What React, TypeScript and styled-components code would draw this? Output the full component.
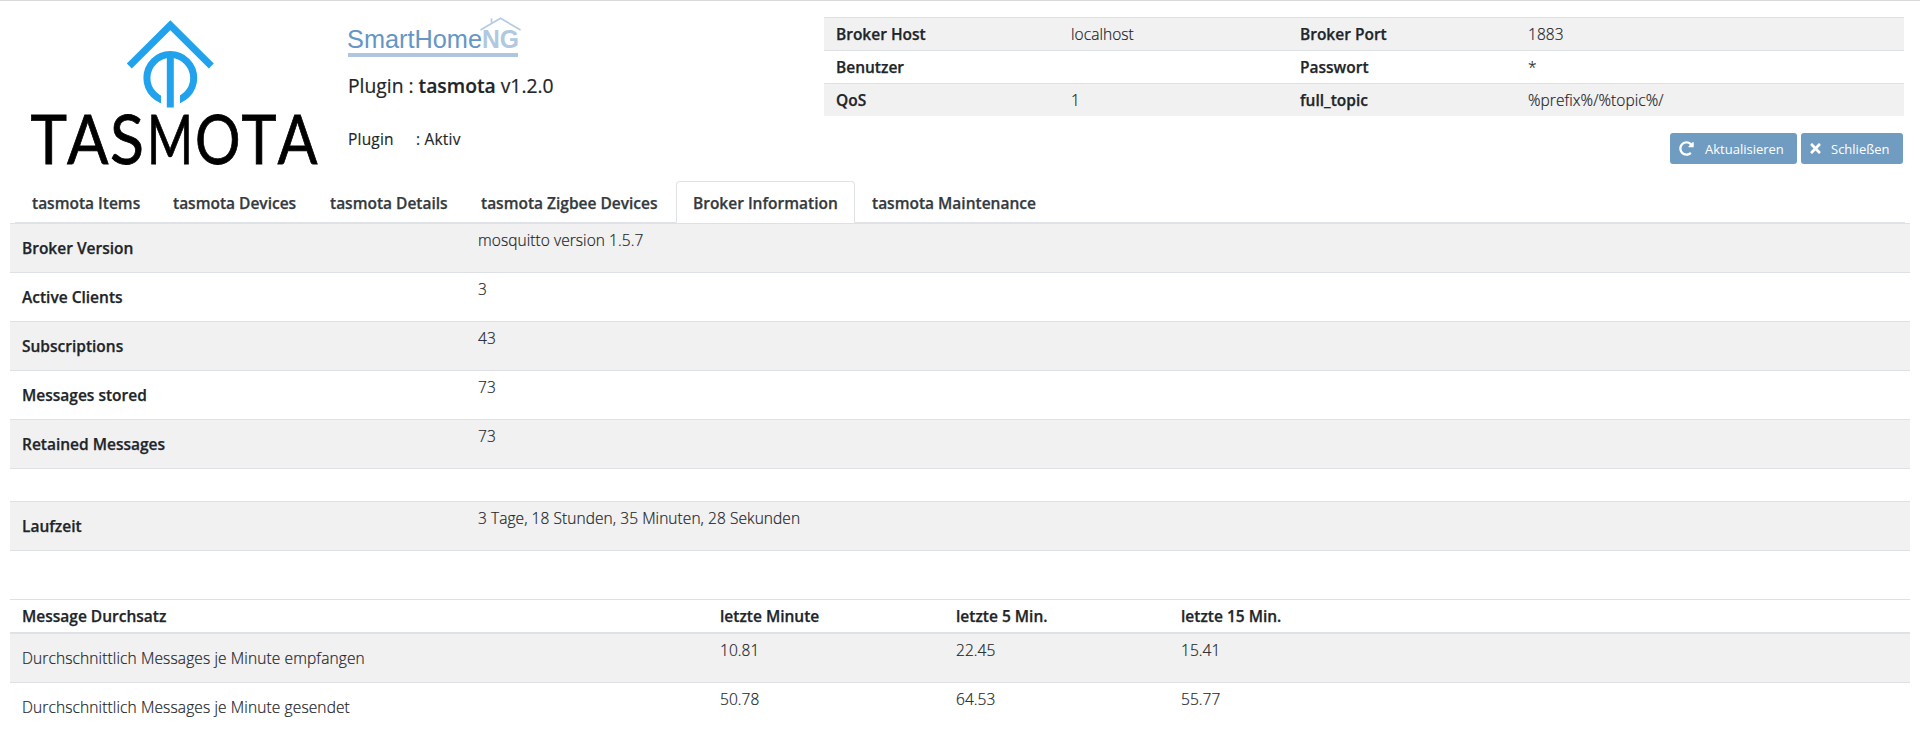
import React from 'react';
import styled, { createGlobalStyle, css } from 'styled-components';
import { FaRedoAlt, FaTimes } from 'react-icons/fa';

const LINE = '#dee2e6';
const STRIPE = '#f1f1f1';

const GlobalStyle = createGlobalStyle`
  *, *::before, *::after { box-sizing: border-box; }
  body {
    margin: 0;
    background: #fff;
    color: #212529;
    font-family: 'Open Sans', 'Noto Sans', sans-serif;
    font-size: 15.5px;
    line-height: 24px;
  }
`;

const Page = styled.div`
  height: 755px;
  overflow: hidden;
  border-top: 1px solid #d9d9d9;
`;

const Header = styled.header`
  display: flex;
  height: 180px;
`;

const LogoColumn = styled.div`
  width: 348px;
  flex: none;
`;

const TitleColumn = styled.div`
  width: 476px;
  flex: none;
  padding-top: 13px;
`;

const PluginTitle = styled.h1`
  margin: 9px 0 0;
  font-size: 19.3px;
  font-weight: 400;
  line-height: 30px;
  -webkit-text-stroke: 0.2px;

  strong { font-weight: 600; }
`;

const PluginState = styled.div`
  display: flex;
  margin-top: 26px;
  letter-spacing: 0.2px;
  -webkit-text-stroke: 0.15px;
`;

const StateLabel = styled.span`
  width: 68px;
`;

const BrokerColumn = styled.div`
  flex: 1;
  padding: 16px 16px 0 0;
`;

const Table = styled.table`
  width: 100%;
  table-layout: fixed;
  border-collapse: separate;
  border-spacing: 0;
`;

const Row = styled.tr<{ $striped?: boolean; $height: number; $borderless?: boolean }>`
  height: ${(p) => p.$height}px;
  background: ${(p) => (p.$striped ? STRIPE : 'transparent')};

  > * { border-top: ${(p) => (p.$borderless ? 0 : 1)}px solid ${LINE}; }
`;

const cell = css`
  padding: 4px 12px;
  text-align: left;
`;

const Label = styled.th<{ $middle?: boolean }>`
  ${cell}
  font-weight: 600;
  -webkit-text-stroke: 0.25px;
  vertical-align: ${(p) => (p.$middle ? 'middle' : 'top')};
`;

const Value = styled.td<{ $middle?: boolean }>`
  ${cell}
  font-weight: 300;
  letter-spacing: ${(p) => (p.$middle ? 0.12 : 0.06)}px;
  -webkit-text-stroke: 0.2px;
  vertical-align: ${(p) => (p.$middle ? 'middle' : 'top')};
`;

const TableHead = styled.thead`
  th { border-bottom: 2px solid ${LINE}; }
`;

const Actions = styled.div`
  display: flex;
  justify-content: flex-end;
  gap: 4px;
  margin-top: 17px;
  padding-right: 1px;
`;

const Button = styled.button<{ $width: number; $inset: number; $gap: number }>`
  display: flex;
  align-items: center;
  gap: ${(p) => p.$gap}px;
  width: ${(p) => p.$width}px;
  height: 31px;
  padding: 0 0 0 ${(p) => p.$inset}px;
  border: 0;
  border-radius: 3px;
  background: #709cc2;
  color: #fff;
  font: 400 13px 'Open Sans', sans-serif;
  white-space: nowrap;
`;

const Tabs = styled.nav`
  display: flex;
  height: 42px;
  margin: 0 15px;
  border-bottom: 1px solid ${LINE};
`;

const Tab = styled.a<{ $active?: boolean; $width: number }>`
  width: ${(p) => p.$width}px;
  height: 42px;
  padding: 9px 0 0 16px;
  border: 1px solid ${(p) => (p.$active ? LINE : 'transparent')};
  border-bottom-color: ${(p) => (p.$active ? '#fff' : 'transparent')};
  border-radius: 4px 4px 0 0;
  color: #343a40;
  font-weight: 600;
  -webkit-text-stroke: 0.25px;
  white-space: nowrap;
`;

const Content = styled.main`
  padding: 0 10px;
`;

const TasmotaLogo = () => (
  <svg width="330" height="180" viewBox="0 1 330 180" role="img">
    <g fill="none" stroke="#21a2ec" strokeWidth="7">
      <path d="M129.3 66 170.3 25.2 211.3 66" />
      <circle cx="170.3" cy="78" r="23.4" />
    </g>
    <path d="M161 84h19v24h-19z" fill="#fff" />
    <path d="M166.8 54h7v53.5h-7z" fill="#21a2ec" />
    <text y="163.6" fontFamily="Lato" fontSize="68" fill="#000" stroke="#000" strokeWidth="0.8">
      <tspan x="30.5" textLength="36.5" lengthAdjust="spacingAndGlyphs">T</tspan>
      <tspan x="67" textLength="41.5" lengthAdjust="spacingAndGlyphs">A</tspan>
      <tspan x="110" textLength="34" lengthAdjust="spacingAndGlyphs">S</tspan>
      <tspan x="147" textLength="46" lengthAdjust="spacingAndGlyphs">M</tspan>
      <tspan x="195" textLength="45.5" lengthAdjust="spacingAndGlyphs">O</tspan>
      <tspan x="241.5" textLength="35" lengthAdjust="spacingAndGlyphs">T</tspan>
      <tspan x="277.5" textLength="40" lengthAdjust="spacingAndGlyphs">A</tspan>
    </text>
  </svg>
);

const SmartHomeLogo = () => (
  <svg width="176" height="48" viewBox="348 14 176 48" role="img" display="block">
    <g fontFamily="Liberation Sans" fontSize="25.5">
      <text x="347" y="48" textLength="135" lengthAdjust="spacingAndGlyphs" fill="#6596c5">SmartHome</text>
      <text x="482" y="48" textLength="37" lengthAdjust="spacingAndGlyphs" fontWeight="700" fill="#b0c8e0">NG</text>
    </g>
    <path d="M348 53h170v4H348z" fill="#aec7df" />
    <path d="M480.5 30 500.5 18.3 520.5 30M491.5 22.500v-4" fill="none" stroke="#b4cbe1" strokeWidth="1.7" />
  </svg>
);

const connection = [
  ['Broker Host', 'localhost', 'Broker Port', '1883'],
  ['Benutzer', '', 'Passwort', '*'],
  ['QoS', '1', 'full_topic', '%prefix%/%topic%/'],
];

const tabs: [string, number][] = [
  ['tasmota Items', 141],
  ['tasmota Devices', 157],
  ['tasmota Details', 151],
  ['tasmota Zigbee Devices', 212],
  ['Broker Information', 179],
  ['tasmota Maintenance', 198],
];

const broker = [
  ['Broker Version', 'mosquitto version 1.5.7'],
  ['Active Clients', '3'],
  ['Subscriptions', '43'],
  ['Messages stored', '73'],
  ['Retained Messages', '73'],
];

const throughput = [
  ['Durchschnittlich Messages je Minute empfangen', '10.81', '22.45', '15.41'],
  ['Durchschnittlich Messages je Minute gesendet', '50.78', '64.53', '55.77'],
];

export default function App() {
  return (
    <Page>
      <GlobalStyle />
      <Header>
        <LogoColumn><TasmotaLogo /></LogoColumn>
        <TitleColumn>
          <SmartHomeLogo />
          <PluginTitle>Plugin : <strong>tasmota</strong> v1.2.0</PluginTitle>
          <PluginState><StateLabel>Plugin</StateLabel>: Aktiv</PluginState>
        </TitleColumn>
        <BrokerColumn>
          <Table>
            <colgroup><col width="235" /><col width="229" /><col width="228" /><col /></colgroup>
            <tbody>
              {connection.map(([a, b, c, d], i) => (
                <Row key={a} $striped={i % 2 === 0} $height={33}>
                  <Label>{a}</Label><Value>{b}</Value><Label>{c}</Label><Value>{d}</Value>
                </Row>
              ))}
            </tbody>
          </Table>
          <Actions>
            <Button $width={127} $inset={9} $gap={11}><FaRedoAlt size={15} />Aktualisieren</Button>
            <Button $width={102} $inset={7} $gap={8}><FaTimes size={15} />Schließen</Button>
          </Actions>
        </BrokerColumn>
      </Header>
      <Tabs>
        {tabs.map(([name, width]) => (
          <Tab key={name} $width={width} $active={name === 'Broker Information'}>{name}</Tab>
        ))}
      </Tabs>
      <Content>
        <Table>
          <colgroup><col width="456" /><col /></colgroup>
          <tbody>
            {broker.map(([name, value], i) => (
              <Row key={name} $striped={i % 2 === 0} $height={49}>
                <Label $middle>{name}</Label><Value>{value}</Value>
              </Row>
            ))}
            <Row $height={33}><Value colSpan={2} /></Row>
            <Row $striped $height={49}>
              <Label $middle>Laufzeit</Label><Value>3 Tage, 18 Stunden, 35 Minuten, 28 Sekunden</Value>
            </Row>
            <Row $height={49}><Value colSpan={2} /></Row>
          </tbody>
        </Table>
        <Table>
          <colgroup><col width="698" /><col width="236" /><col width="225" /><col /></colgroup>
          <TableHead>
            <Row $height={35}>
              <Label>Message Durchsatz</Label><Label>letzte Minute</Label><Label>letzte 5 Min.</Label><Label>letzte 15 Min.</Label>
            </Row>
          </TableHead>
          <tbody>
            {throughput.map(([name, ...values], i) => (
              <Row key={name} $striped={i === 0} $borderless={i === 0} $height={i === 0 ? 48 : 49}>
                <Value $middle>{name}</Value>
                {values.map((v) => <Value key={v}>{v}</Value>)}
              </Row>
            ))}
          </tbody>
        </Table>
      </Content>
    </Page>
  );
}
